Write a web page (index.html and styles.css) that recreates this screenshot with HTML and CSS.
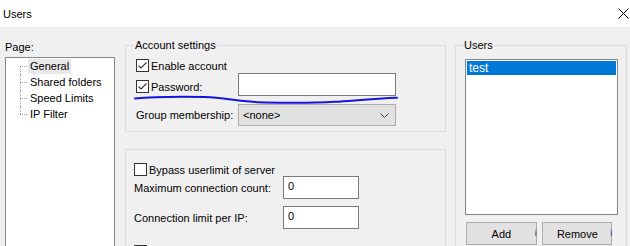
FILE: index.html
```html
<!DOCTYPE html>
<html>
<head>
	<meta charset="UTF-8">
	<title>Users</title>
	<link rel="stylesheet" href="styles.css">
</head>
<body>
	<div class="titlebar">
		<span class="title">Users</span>
		<svg class="close" width="11" height="11" viewBox="0 0 11 11"><path d="M0.5 0.5 L10.5 10.5 M10.5 0.5 L0.5 10.5" stroke="#000" stroke-width="1" fill="none"/></svg>
	</div>
	<div class="main">
		<div class="pagecol">
			<div class="pagelabel">Page:</div>
			<ul class="tree">
				<li><span class="sel">General</span></li>
				<li><span>Shared folders</span></li>
				<li><span>Speed Limits</span></li>
				<li><span>IP Filter</span></li>
			</ul>
		</div>
		<div class="midcol">
			<fieldset class="group account">
				<legend>Account settings</legend>
				<div class="check-row enable"><span class="cb checked"></span>Enable account</div>
				<div class="field-row pw">
					<div class="check-row"><span class="cb checked"></span>Password:</div>
					<input class="text pass" type="text" value="">
				</div>
				<div class="field-row grp">
					<span>Group membership:</span>
					<div class="select">
						<span>&lt;none&gt;</span>
						<svg width="9" height="5" viewBox="0 0 9 5"><path d="M0.5 0.5 L4.5 4.5 L8.5 0.5" stroke="#444" stroke-width="1" fill="none"/></svg>
					</div>
				</div>
			</fieldset>
			<fieldset class="group limits">
				<div class="check-row bypass"><span class="cb"></span>Bypass userlimit of server</div>
				<div class="field-row lim">
					<span>Maximum connection count:</span>
					<input class="text num" type="text" value="0">
				</div>
				<div class="field-row lim second">
					<span>Connection limit per IP:</span>
					<input class="text num" type="text" value="0">
				</div>
				<div class="check-row last"><span class="cb"></span></div>
			</fieldset>
		</div>
		<div class="usercol">
			<fieldset class="group users">
				<legend>Users</legend>
				<div class="listbox">
					<div class="item sel">test</div>
				</div>
				<div class="buttons">
					<button class="btn add">Add</button><span class="mark">i</span>
					<button class="btn remove">Remove</button><span class="mark">i</span>
				</div>
			</fieldset>
		</div>
	</div>
	<svg class="scribble" width="630" height="246" viewBox="0 0 630 246">
		<path d="M135 98.5 C150 97 180 96.5 205 97 C225 97.5 240 102 265 102.5 C290 103 315 103 335 101.8 C355 100.5 375 98.5 397 97.8" stroke="#1414e0" stroke-width="2" fill="none" stroke-linecap="round"/>
	</svg>
</body>
</html>
```

FILE: styles.css
```css
html, body {
	margin: 0;
	padding: 0;
}
body {
	position: relative;
	width: 630px;
	height: 246px;
	overflow: hidden;
	background: #f0f0f0;
	font: 11px/14px "Liberation Sans", Arial, sans-serif;
	color: #000;
}
.titlebar {
	display: flex;
	align-items: center;
	height: 27px;
	padding-left: 3px;
	background: #fff;
}
.title {
	font-size: 11px;
}
.close {
	margin-left: auto;
	margin-right: 1px;
}
.main {
	display: flex;
	padding: 11px 0 0 5px;
}

/* left column */
.pagecol {
	width: 110px;
}
.pagelabel {
	margin-top: 2px;
	height: 14px;
}
.tree {
	list-style: none;
	margin: 3px 0 0;
	padding: 0;
	height: 189px;
	background: #fff;
	border: 1px solid #828790;
	border-bottom: 0;
}
.tree li {
	position: relative;
	height: 16px;
	line-height: 16px;
	padding-left: 22px;
}
.tree li::before {
	content: "";
	position: absolute;
	left: 14px;
	top: 8px;
	width: 7px;
	border-top: 1px dotted #a0a0a0;
}
.tree li::after {
	content: "";
	position: absolute;
	left: 14px;
	top: 0;
	bottom: 0;
	border-left: 1px dotted #a0a0a0;
}
.tree li:first-child::after {
	top: 8px;
}
.tree li:last-child::after {
	bottom: 8px;
}
.tree span {
	display: inline-block;
	padding: 0 2px;
	line-height: 15px;
}
.tree .sel {
	background: #e8e8e8;
}

/* group boxes */
.group {
	margin: 0;
	border: 1px solid #dcdcdc;
	min-width: 0;
}
.group legend {
	padding: 0 1px;
	margin-left: -2px;
	line-height: 14px;
}
.midcol {
	width: 321px;
	margin-left: 10px;
}
.account {
	padding: 0 9px 5px 10px;
}
.limits {
	margin-top: 17px;
	padding: 0 9px 0 8px;
	height: 97px;
	border-bottom: 0;
}
.usercol {
	width: 172px;
	margin-left: 9px;
}
.users {
	padding: 0 8px 6px 9px;
}

/* checkbox rows */
.check-row {
	display: flex;
	align-items: center;
	height: 13px;
}
.cb {
	box-sizing: border-box;
	flex: none;
	width: 13px;
	height: 13px;
	margin-right: 2px;
	border: 1px solid #333;
	background: #fff;
}
.cb.checked {
	background: #fff url("data:image/svg+xml;utf8,<svg xmlns='http://www.w3.org/2000/svg' width='11' height='11'><path d='M1.5 5.5 L4 8 L9.5 2.5' stroke='%23333' stroke-width='1.1' fill='none'/></svg>") no-repeat center;
}
.enable {
	margin-top: 7px;
}
.bypass {
	margin-top: 13px;
}
.last {
	margin-top: 16px;
	align-items: flex-start;
	height: 1px;
}

/* label + control rows */
.field-row {
	display: grid;
	align-items: center;
}
.pw {
	grid-template-columns: 102px 158px;
	height: 23px;
	margin-top: 1px;
}
.pw .check-row {
	align-self: end;
	margin-bottom: 3px;
}
.grp {
	grid-template-columns: 102px 158px;
	margin-top: 8px;
}
.lim {
	grid-template-columns: 149px 76px;
	height: 23px;
}
.lim.second {
	margin-top: 7px;
}
.text {
	box-sizing: border-box;
	height: 23px;
	margin: 0;
	padding: 0 4px 3px;
	border: 1px solid #7a7a7a;
	background: #fff;
	font: inherit;
	outline: none;
}
.pass {
	width: 158px;
}
.num {
	width: 76px;
}
.select {
	box-sizing: border-box;
	display: flex;
	align-items: center;
	justify-content: space-between;
	width: 158px;
	height: 22px;
	padding: 0 6px 0 4px;
	border: 1px solid #adadad;
	background: #e1e1e1;
}

/* users list */
.listbox {
	box-sizing: border-box;
	height: 156px;
	margin-top: 7px;
	padding: 1px;
	border: 1px solid #828790;
	background: #fff;
}
.item {
	height: 14px;
	line-height: 14px;
	margin: 0;
	padding-left: 2px;
	font-size: 12px;
}
.item.sel {
	background: #0078d7;
	color: #fff;
}
.buttons {
	display: flex;
	align-items: flex-start;
	margin-top: 7px;
	padding-left: 1px;
}
.btn {
	box-sizing: border-box;
	height: 23px;
	margin: 0;
	padding: 0;
	border: 1px solid #adadad;
	background: #e1e1e1;
	font: inherit;
	color: #000;
}
.add {
	width: 73px;
}
.remove {
	width: 72px;
}
.mark {
	width: 8px;
	margin-left: -2px;
	padding-top: 5px;
	font-size: 9px;
	line-height: 12px;
	color: #2030b0;
}

/* pen mark drawn over the dialog */
.scribble {
	position: absolute;
	left: 0;
	top: 0;
	pointer-events: none;
}
```
